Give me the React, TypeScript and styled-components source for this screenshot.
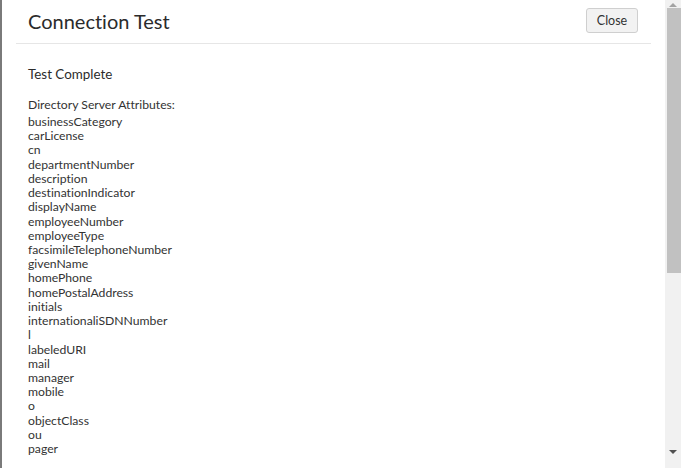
import React from "react";
import styled, { createGlobalStyle } from "styled-components";

const Global = createGlobalStyle`
  html, body { margin: 0; padding: 0; background: #fff; overflow: hidden; }
  body {
    font-family: Lato, "Open Sans", sans-serif;
    color: #333;
    font-variant-ligatures: none;
  }
`;

const Frame = styled.div`
  display: flex;
  width: 681px;
  height: 468px;
  overflow: hidden;
`;

const LeftEdge = styled.div`
  width: 2px;
  flex: none;
  background: #7a7a7a;
`;

const Panel = styled.div`
  flex: 1;
  display: flex;
  flex-direction: column;
  min-width: 0;
  overflow: hidden;
`;

const Header = styled.div`
  flex: none;
  height: 44px;
  box-sizing: border-box;
  display: flex;
  align-items: center;
  justify-content: space-between;
  margin: 0 14px;
  padding: 0 13px 0 12px;
  border-bottom: 1px solid #e6e6e6;
`;

const Title = styled.h1`
  margin: 0;
  font-size: 20px;
  font-weight: 400;
  color: #2b2b2b;
  line-height: 1;
  padding-bottom: 2px;
`;

const Button = styled.button`
  font-family: Lato, "Open Sans", sans-serif;
  font-size: 12.5px;
  color: #333;
  background: #f2f2f2;
  border: 1px solid #cfcfcf;
  border-radius: 3px;
  width: 52px;
  height: 25px;
  padding: 0;
  margin-bottom: 3px;
`;

const Body = styled.div`
  flex: none;
  padding: 22px 26px 0;
`;

const Status = styled.div`
  font-size: 13.4px;
  line-height: 16px;
  color: #2b2b2b;
`;

const SectionLabel = styled.div`
  font-size: 12.2px;
  line-height: 15px;
  margin-top: 15px;
  margin-bottom: 3px;
  color: #333;
`;

const List = styled.ul`
  list-style: none;
  margin: 0;
  padding: 0;
`;

const Item = styled.li`
  font-size: 12.2px;
  line-height: 14.22px;
  color: #333;
`;

const Scrollbar = styled.div`
  width: 16px;
  flex: none;
  background: #f1f1f1;
  display: flex;
  flex-direction: column;
  align-items: center;
`;

const ArrowBox = styled.div<{ $h: number }>`
  height: ${(p) => p.$h}px;
  width: 100%;
  display: flex;
  align-items: center;
  justify-content: center;
  flex: none;
`;

const Thumb = styled.div`
  width: 14px;
  height: 265px;
  margin-left: 1px;
  background: #c1c1c1;
  flex: none;
`;

const Spacer = styled.div`
  flex: 1;
`;

const items = [
  "businessCategory",
  "carLicense",
  "cn",
  "departmentNumber",
  "description",
  "destinationIndicator",
  "displayName",
  "employeeNumber",
  "employeeType",
  "facsimileTelephoneNumber",
  "givenName",
  "homePhone",
  "homePostalAddress",
  "initials",
  "internationaliSDNNumber",
  "l",
  "labeledURI",
  "mail",
  "manager",
  "mobile",
  "o",
  "objectClass",
  "ou",
  "pager",
];

export default function App() {
  return (
    <>
      <Global />
      <Frame>
        <LeftEdge />
        <Panel>
          <Header>
            <Title>Connection Test</Title>
            <Button>Close</Button>
          </Header>
          <Body>
            <Status>Test Complete</Status>
            <SectionLabel>Directory Server Attributes:</SectionLabel>
            <List>
              {items.map((it) => (
                <Item key={it}>{it}</Item>
              ))}
            </List>
          </Body>
        </Panel>
        <Scrollbar>
          <ArrowBox $h={8}>
            <svg width="8" height="5" viewBox="0 0 8 5">
              <path d="M0 5 L4 1 L8 5 Z" fill="#a3a3a3" />
            </svg>
          </ArrowBox>
          <Thumb />
          <Spacer />
          <ArrowBox $h={16}>
            <svg width="8" height="5" viewBox="0 0 8 5">
              <path d="M0 0 L8 0 L4 4 Z" fill="#505050" />
            </svg>
          </ArrowBox>
          <ArrowBox $h={8} />
        </Scrollbar>
      </Frame>
    </>
  );
}
